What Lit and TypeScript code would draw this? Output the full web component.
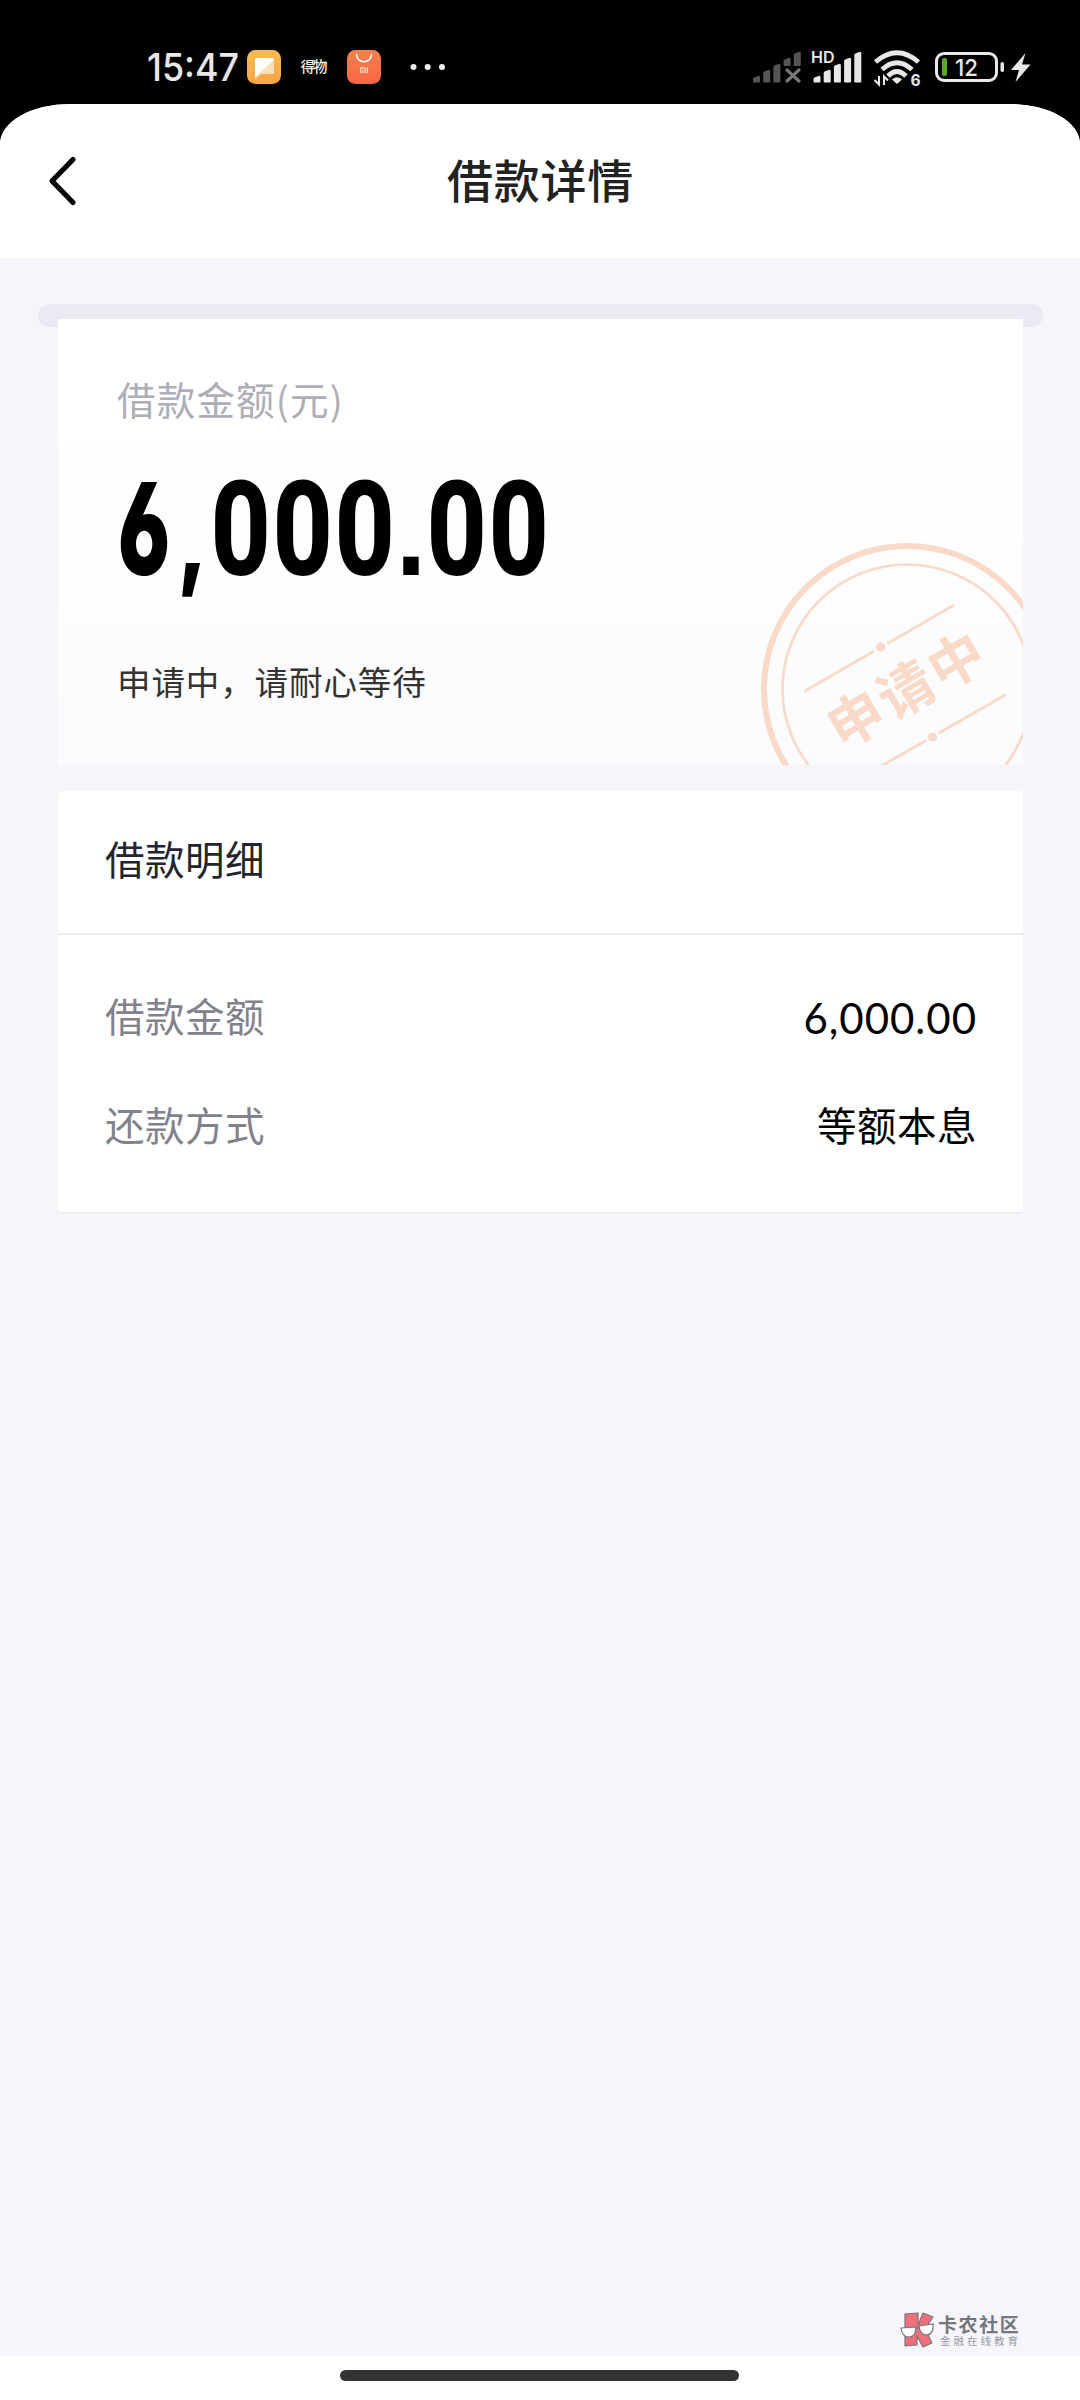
import { LitElement, html, css, svg } from "lit";
import { customElement, property } from "lit/decorators.js";

@customElement("status-bar")
class StatusBar extends LitElement {
  static styles = css`
    :host { display: flex; height: 104px; background: #000; align-items: flex-start; }
    svg { display: block; }
    .t { font-family: "Inter", "Roboto", sans-serif; fill: #e8e8e8; }
    .cjk { font-family: "Noto Sans CJK SC", sans-serif; fill: #eee; }
  `;

  private bars(x: number, color: string, cut: boolean) {
    return [0, 1, 2, 3, 4].map((i) => {
      const left = x + i * 10.2;
      const top = 76 - i * 6;
      const bottom = cut && i > 2 ? 66 : 82.5;
      return svg`<path fill=${color} d="M${left} ${top + 3} Q${left} ${top + 2} ${left + 1.5} ${top + 1.3} L${left + 5} ${top} Q${left + 7} ${top - 0.6} ${left + 7} ${top + 1.5} V${bottom - 1} Q${left + 7} ${bottom} ${left + 6} ${bottom} H${left + 1} Q${left} ${bottom} ${left} ${bottom - 1} Z"></path>`;
    });
  }

  render() {
    return html`<svg width="1080" height="104" viewBox="0 0 1080 104">
      <defs>
        <linearGradient id="g1" x1="0" y1="0" x2="0" y2="1">
          <stop offset="0" stop-color="#f6bd4f"></stop><stop offset="1" stop-color="#f9a545"></stop>
        </linearGradient>
        <linearGradient id="g2" x1="0" y1="0" x2="0" y2="1">
          <stop offset="0" stop-color="#f3834c"></stop><stop offset="1" stop-color="#fb6545"></stop>
        </linearGradient>
      </defs>
      <text class="t" x="147" y="81" font-size="38.5" font-weight="550" textLength="92" lengthAdjust="spacingAndGlyphs">15:47</text>
      <rect x="247" y="50" width="34" height="34" rx="8.5" fill="url(#g1)"></rect>
      <path d="M256.5 58 H272 Q274 58 274 60 V72 Q274 74 272 74 H261 L255 78.500 V59.500 Q255 58 256.500 58 Z" fill="#fff"></path>
      <path d="M274 60 V72 Q274 74 272 74 H261 L255 78.500 V77 Z" fill="#fbdfb5"></path>
      <text class="cjk" x="300.500" y="72.300" font-size="14.500" font-weight="500" textLength="27">得物</text>
      <rect x="347" y="50" width="34" height="34" rx="8.5" fill="url(#g2)"></rect>
      <path d="M356.500 54.500 C357 64 371 64 371.500 54.500" fill="none" stroke="#fff" stroke-width="1.500" stroke-linecap="round"></path>
      <path d="M360.800 73 V67.900 H364.500 Q365.200 67.900 365.200 69 V73 M363 70 V73 M367.300 67.500 V73" fill="none" stroke="#ffeadf" stroke-width="1.100"></path>
      <circle cx="413.500" cy="67" r="3" fill="#eee"></circle>
      <circle cx="427.700" cy="67" r="3" fill="#eee"></circle>
      <circle cx="442" cy="67" r="3" fill="#eee"></circle>

      ${this.bars(753, "#555", true)}
      <path d="M787 70 L799 81 M799 70 L787 81" stroke="#777" stroke-width="3.200" stroke-linecap="round"></path>
      <text class="t" x="811" y="63" font-size="16" font-weight="600" textLength="23.500">HD</text>
      ${this.bars(813.500, "#e8e8e8", false)}

      <g fill="none" stroke="#e8e8e8" stroke-width="4.800">
        <path d="M875.500 62 Q897 43.500 918.500 62"></path>
        <path d="M882 69.500 Q897 56 912 69.500"></path>
        <path d="M888 76 Q897 67 906 76"></path>
      </g>
      <path d="M892 79.500 Q897 75 902 79.500 L897 84 Z" fill="#e8e8e8"></path>
      <path d="M874.500 80 L879 84.500 V76 M884 85 V76.500 L888 80.500" fill="none" stroke="#e8e8e8" stroke-width="2"></path>
      <text class="t" x="910.500" y="85.500" font-size="15.500" font-weight="700">6</text>

      <rect x="936.500" y="53.500" width="60" height="27" rx="7.500" fill="none" stroke="#e8e8e8" stroke-width="3"></rect>
      <rect x="942" y="58" width="5" height="18" rx="2" fill="#5da826"></rect>
      <text class="t" x="955" y="76" font-size="23" font-weight="500" textLength="23" lengthAdjust="spacingAndGlyphs">12</text>
      <rect x="1000.500" y="62" width="3.500" height="10" rx="1.700" fill="#e8e8e8"></rect>
      <path d="M1025.500 53 L1011 70 H1019 L1015.500 82 L1030.500 64.500 H1022 Z" fill="#e8e8e8"></path>
    </svg>`;
  }
}

@customElement("detail-row")
class DetailRow extends LitElement {
  @property() label = "";
  @property() value = "";
  @property({ type: Boolean }) numeric = false;

  static styles = css`
    :host { display: flex; justify-content: space-between; align-items: center; height: 60px;
      font: 400 39.500px/60px "Noto Sans CJK SC", sans-serif; letter-spacing: 0.500px; }
    .label { color: #82828c; }
    .value { color: #000; margin-right: -1px; }
    .numeric { font-family: "Lato", sans-serif; font-size: 42px; letter-spacing: 1px; margin-top: 5px; }
  `;

  render() {
    return html`<span class="label">${this.label}</span>
      <span class="value ${this.numeric ? "numeric" : ""}">${this.value}</span>`;
  }
}

@customElement("app-root")
class AppRoot extends LitElement {
  static styles = css`
    :host { display: block; width: 1080px; height: 2400px; overflow: hidden; background: #000;
      font-family: "Noto Sans CJK SC", sans-serif; }
    * { box-sizing: border-box; }
    svg { display: block; }
    .page { position: relative; display: flex; flex-direction: column; height: 2296px; background: #f5f5fb;
      border-radius: 70px 70px 0 0 / 40px 40px 0 0; overflow: hidden; }
    .header { display: grid; grid-template-columns: 120px 1fr 120px; align-items: center; height: 154px; background: #fff; }
    .back { margin-left: 46px; }
    .title { text-align: center; font-size: 46px; line-height: 60px; font-weight: 500; letter-spacing: 0.800px;
      color: #222; padding: 0 0 6px 1px; }
    .main { flex: 1; padding: 46px 37px 0 38px; }
    .slot { height: 23px; border-radius: 12px; background: #eaeaf2; padding-top: 15px; }
    .card { margin: 0 20px; }
    .amount-card { position: relative; height: 446px; overflow: hidden; padding: 49px 0 0 59px;
      background: linear-gradient(#fff 25%, #fbfbfd); }
    .caption { font-size: 38.500px; line-height: 60px; letter-spacing: 1.200px; color: #aeaeb9; }
    .amount { display: flex; align-items: baseline; height: 120px; margin: 41px 0 0 -4px; line-height: 120px;
      font-family: "Roboto", sans-serif; font-weight: 800; font-size: 131px; color: #000;
      transform: scaleX(0.8); transform-origin: 0 0; white-space: nowrap; }
    .digit { width: 77.500px; text-align: center; }
    .lead, .comma, .point { font-family: "Inter", sans-serif; text-align: center; }
    .lead { width: 77.500px; display: flex; justify-content: center; font-size: 128px; font-weight: 900;
      font-feature-settings: "cv03", "cv04"; transform: scaleX(0.79); }
    .comma { width: 43.500px; font-size: 108px; }
    .point { width: 37.500px; font-size: 108px; font-feature-settings: "ss07"; }
    .status { font-size: 33.500px; line-height: 50px; letter-spacing: 0.900px; color: #333; margin-top: 67px; }
    .stamp { position: absolute; left: 702px; top: 224px; }
    .stamp text { font-family: "Noto Sans CJK SC", sans-serif; font-weight: 700; }
    .detail-card { margin-top: 26px; height: 423px; background: #fff; border-radius: 4px; border-bottom: 2px solid #ededf0; }
    .detail-title { height: 144px; padding: 35px 47px 0 47px; border-bottom: 2px solid #ededef;
      font-size: 39.500px; line-height: 64px; letter-spacing: 0.500px; color: #24242e; }
    .rows { display: flex; flex-direction: column; gap: 49px; padding: 50px 47px 0 47px; }
    .nav { display: flex; justify-content: center; height: 44px; background: #fff; padding: 14px 1px 0 0; }
    .pill { width: 399px; height: 10.500px; border-radius: 6px; background: #333; }
    .brand { position: absolute; right: 62px; bottom: 52px; display: flex; gap: 3px; align-items: center; }
    .brand-text { display: flex; flex-direction: column; white-space: nowrap; width: 80px; }
    .brand-name { font-size: 19px; line-height: 21px; font-weight: 700; letter-spacing: 1.600px; color: #77777e; }
    .brand-sub { font-size: 10.500px; line-height: 13px; letter-spacing: 3px; color: #9a9aa2; padding-left: 2px; }
  `;

  private stamp() {
    return html`<svg class="stamp" width="300" height="300" viewBox="760 543 300 300">
      <g fill="none" stroke="#f9d9c7">
        <circle cx="907" cy="689" r="143" stroke-width="6"></circle>
        <circle cx="907" cy="689" r="124.500" stroke-width="2.700"></circle>
        <path stroke-width="2.700" d="M804 691.500 L874 651 M887.500 643.500 L954 605 M856 780.500 L926 740.500 M939 733 L1006 694.500"></path>
      </g>
      <g fill="#f9d9c7">
        <circle cx="880.800" cy="647" r="4.600"></circle>
        <circle cx="932.500" cy="737" r="4.600"></circle>
        <text transform="translate(906 690) rotate(-30.300)" x="1.500" y="20" text-anchor="middle" font-size="55" letter-spacing="3">申请中</text>
      </g>
    </svg>`;
  }

  private amount(text: string) {
    return [...text].map((c, i) => {
      const kind = c === "," ? "comma" : c === "." ? "point" : i === 0 ? "lead" : "digit";
      return html`<span class=${kind}>${c}</span>`;
    });
  }

  render() {
    return html`
      <status-bar></status-bar>
      <div class="page">
        <div class="header">
          <svg class="back" width="34" height="56" viewBox="0 0 34 56">
            <path d="M27 6.500 L6 28 L27 49.500" fill="none" stroke="#000" stroke-width="5.200" stroke-linecap="round" stroke-linejoin="round"></path>
          </svg>
          <div class="title">借款详情</div>
        </div>
        <div class="main">
          <div class="slot">
            <div class="card amount-card">
              <div class="caption">借款金额(元)</div>
              <div class="amount">${this.amount("6,000.00")}</div>
              <div class="status">申请中，请耐心等待</div>
              ${this.stamp()}
            </div>
            <div class="card detail-card">
              <div class="detail-title">借款明细</div>
              <div class="rows">
                <detail-row label="借款金额" value="6,000.00" numeric></detail-row>
                <detail-row label="还款方式" value="等额本息"></detail-row>
              </div>
            </div>
          </div>
        </div>
        <div class="nav"><div class="pill"></div></div>
        <div class="brand">
          <svg width="35" height="36" viewBox="0 0 35 36">
            <path d="M5 2 L18 1 V13 L23 1 L33 5 L25 17 L32 31 L23 35 L17 24 V33 L5 34 Z" fill="#ef6f7b" stroke="#77777e" stroke-width="1.200" stroke-linejoin="round"></path>
            <path d="M1 16 L16 15 Q16 25 9 25 Q2 25 1 16 Z M19 14 L33 12 Q34 22 27 23 Q20 23 19 14 Z M15.500 17 L19 15.500" fill="#fff" stroke="#77777e" stroke-width="1.200"></path>
          </svg>
          <div class="brand-text">
            <div class="brand-name">卡农社区</div>
            <div class="brand-sub">金融在线教育</div>
          </div>
        </div>
      </div>`;
  }
}
